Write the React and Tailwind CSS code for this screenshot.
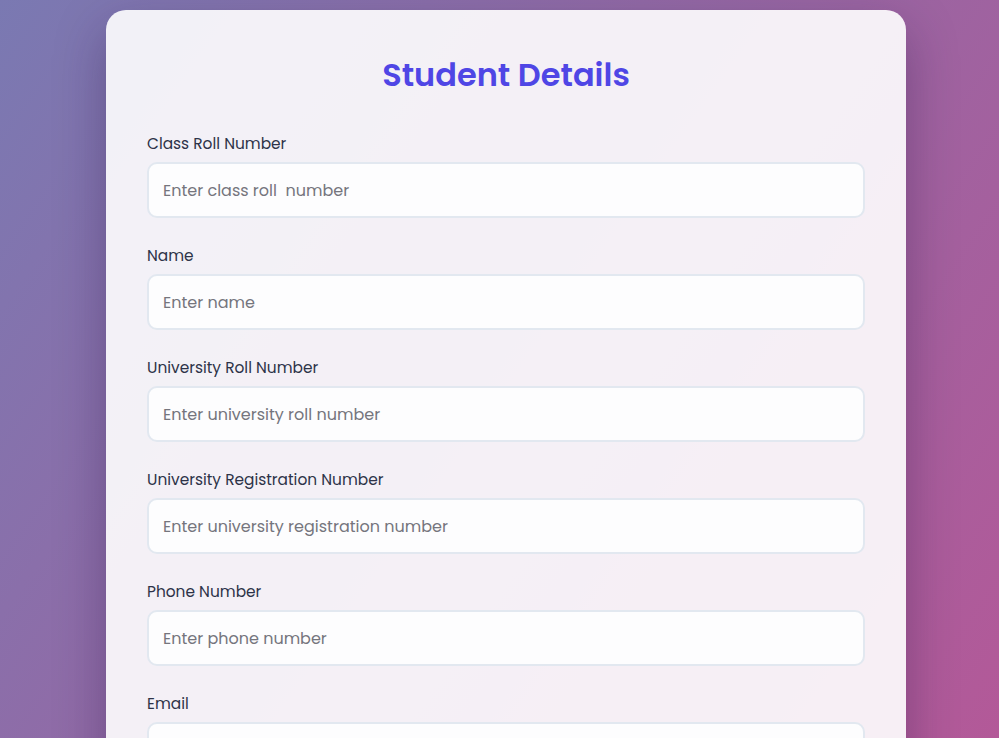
import { useState } from "react";

const fields = [
    { id: "classRoll", label: "Class Roll Number", placeholder: "Enter class roll  number", type: "text" },
    { id: "name", label: "Name", placeholder: "Enter name", type: "text" },
    { id: "uniRoll", label: "University Roll Number", placeholder: "Enter university roll number", type: "text" },
    { id: "uniReg", label: "University Registration Number", placeholder: "Enter university registration number", type: "text" },
    { id: "phone", label: "Phone Number", placeholder: "Enter phone number", type: "tel" },
    { id: "email", label: "Email", placeholder: "Enter email", type: "email" },
    { id: "department", label: "Department", placeholder: "Enter department", type: "text" },
];

const App = () => {
    const [form, setForm] = useState({});

    const handleChange = (e) => {
        setForm({ ...form, [e.target.name]: e.target.value });
    };

    return (
        <div
            className="min-h-screen bg-[linear-gradient(125deg,#7a79b2_0%,#9a65a2_50%,#bb5595_100%)] py-[10px] pl-[13px]"
            style={{ fontFamily: "Poppins, 'Open Sans', 'Noto Sans', sans-serif" }}
        >
            <div className="mx-auto w-[800px] rounded-[20px] bg-white/90 px-[41px] pt-[41px] pb-10 shadow-[0_20px_50px_rgba(40,20,70,0.35)]">
                <h1 className="mb-[34px] text-center text-[32px] leading-[48px] font-semibold text-[#4f46e5]">
                    Student Details
                </h1>

                <form onSubmit={(e) => e.preventDefault()}>
                    {fields.map((f) => (
                        <div key={f.id} className="mb-[27px]">
                            <label htmlFor={f.id} className="mb-[7px] block text-[15.4px] leading-[22px] text-[#2d3348]">
                                {f.label}
                            </label>
                            <input
                                id={f.id}
                                name={f.id}
                                type={f.type}
                                value={form[f.id] || ""}
                                onChange={handleChange}
                                placeholder={f.placeholder}
                                className="block h-[56px] w-full rounded-[10px] border-2 border-[#e2e8f0] bg-[#fdfdfe] px-[14px] text-[16px] text-[#2d3348] outline-none placeholder:text-[#75757d] focus:border-[#4f46e5]"
                            />
                        </div>
                    ))}

                    <button
                        type="submit"
                        className="mt-2 h-[56px] w-full rounded-[10px] bg-[#4f46e5] text-[16px] font-semibold text-white"
                    >
                        Submit
                    </button>
                </form>
            </div>
        </div>
    );
};

export default App;
